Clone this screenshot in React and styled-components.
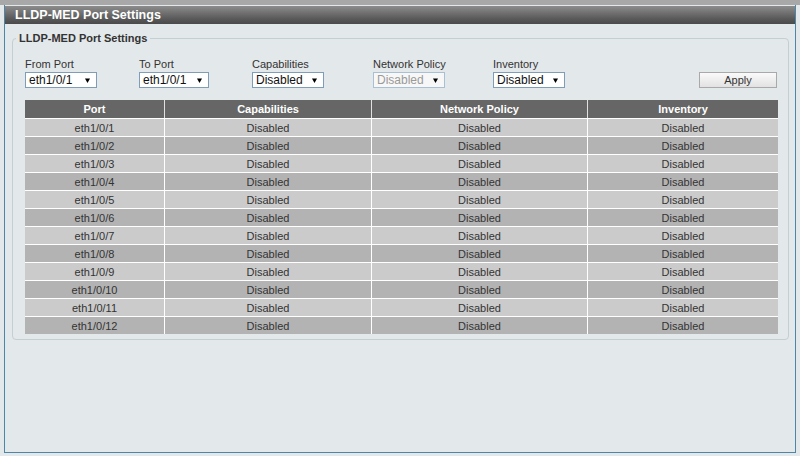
import styled, { createGlobalStyle } from 'styled-components';

const GlobalStyle = createGlobalStyle`
  html, body {
    margin: 0;
    padding: 0;
    background: #e3e8ea;
    font-family: "Liberation Sans", Arial, sans-serif;
  }
`;

const Page = styled.div`
  width: 800px;
  height: 456px;
  box-sizing: border-box;
  padding-top: 5px;
  background: linear-gradient(#a8a8a8, #a8a8a8) top / 100% 5px no-repeat, #e3e8ea;
`;

const Frame = styled.div`
  margin: 0 4px;
  height: 448px;
  box-sizing: border-box;
  border-left: 1px solid #4f86a8;
  border-right: 1px solid #4f86a8;
  border-bottom: 1px solid #4f86a8;
  background: #e3e8ea;
  display: flex;
  flex-direction: column;
`;

const TitleBar = styled.div`
  height: 18px;
  background: linear-gradient(#8c8c8c, #5a5a5a 70%, #4a4a4a);
  color: #fff;
  font-size: 12.5px;
  font-weight: bold;
  line-height: 18px;
  padding-left: 10px;
  margin-top: 1px;
`;

const Fieldset = styled.fieldset`
  margin: 8px 7px 0 7px;
  padding: 10px 10px 5px 12px;
  border: 1px solid #c4cfd3;
  border-radius: 4px;
`;

const Legend = styled.legend`
  font-size: 11px;
  font-weight: bold;
  color: #333;
  padding: 0 3px;
  margin-left: -9px;
`;

const Controls = styled.div`
  display: flex;
  align-items: flex-end;
  height: 38px;
  margin-top: -4px;
`;

const Field = styled.div`
  width: ${(p) => p.$w}px;
  display: flex;
  flex-direction: column;
  gap: 2px;
`;

const Label = styled.div`
  font-size: 11px;
  color: #333;
`;

const Select = styled.div`
  width: ${(p) => p.$w || 72}px;
  height: 16px;
  box-sizing: border-box;
  border: 1px solid ${(p) => (p.$disabled ? '#a9bfd3' : '#7f9db9')};
  background: ${(p) => (p.$disabled ? '#f7f7f7' : '#fff')};
  color: ${(p) => (p.$disabled ? '#9a9a9a' : '#111')};
  font-size: 12px;
  line-height: 14px;
  padding: 0 6px 0 3px;
  display: flex;
  justify-content: space-between;
  align-items: center;
`;

const Arrow = () => (
  <svg width="5" height="5" viewBox="0 0 5 5">
    <polygon points="0,0.5 5,0.5 2.5,5" fill="#000" />
  </svg>
);

const ApplyButton = styled.div`
  margin-left: auto;
  margin-right: 1px;
  width: 78px;
  height: 16px;
  box-sizing: border-box;
  border: 1px solid #a9a9a9;
  background: linear-gradient(#fafafa, #e2e2e2);
  font-size: 11px;
  color: #333;
  text-align: center;
  line-height: 14px;
`;

const Table = styled.table`
  margin-top: 12px;
  width: 753px;
  border-collapse: separate;
  border-spacing: 0;
  font-size: 11px;
  table-layout: fixed;
`;

const Th = styled.th`
  background: #666666;
  color: #fff;
  font-weight: bold;
  height: 18px;
  padding: 0;
  border-right: 1px solid #e0e0e0;
  &:last-child {
    border-right: none;
  }
`;

const Td = styled.td`
  background: ${(p) => (p.$odd ? '#b3b3b3' : '#cbcbcb')};
  color: #333;
  text-align: center;
  height: 17px;
  padding: 0;
  border-top: 1px solid #fff;
  border-right: 1px solid #fff;
  &:last-child {
    border-right: none;
  }
`;

const fields = [
  { label: 'From Port', value: 'eth1/0/1', w: 114 },
  { label: 'To Port', value: 'eth1/0/1', w: 113, sw: 70 },
  { label: 'Capabilities', value: 'Disabled', w: 121 },
  { label: 'Network Policy', value: 'Disabled', w: 120, disabled: true },
  { label: 'Inventory', value: 'Disabled', w: 120 },
];

const rows = Array.from({ length: 12 }, (_, i) => `eth1/0/${i + 1}`);

const App = () => (
  <Page>
    <GlobalStyle />
    <Frame>
      <TitleBar>LLDP-MED Port Settings</TitleBar>
      <Fieldset>
        <Legend>LLDP-MED Port Settings</Legend>
        <Controls>
          {fields.map((f) => (
            <Field key={f.label} $w={f.w}>
              <Label>{f.label}</Label>
              <Select $w={f.sw} $disabled={f.disabled}>
                {f.value}
                <Arrow />
              </Select>
            </Field>
          ))}
          <ApplyButton>Apply</ApplyButton>
        </Controls>
        <Table>
          <colgroup>
            <col style={{ width: 140 }} />
            <col style={{ width: 207 }} />
            <col style={{ width: 216 }} />
            <col style={{ width: 190 }} />
          </colgroup>
          <thead>
            <tr>
              <Th>Port</Th>
              <Th>Capabilities</Th>
              <Th>Network Policy</Th>
              <Th>Inventory</Th>
            </tr>
          </thead>
          <tbody>
            {rows.map((port, i) => (
              <tr key={port}>
                <Td $odd={i % 2 === 1}>{port}</Td>
                <Td $odd={i % 2 === 1}>Disabled</Td>
                <Td $odd={i % 2 === 1}>Disabled</Td>
                <Td $odd={i % 2 === 1}>Disabled</Td>
              </tr>
            ))}
          </tbody>
        </Table>
      </Fieldset>
    </Frame>
  </Page>
);

export default App;
